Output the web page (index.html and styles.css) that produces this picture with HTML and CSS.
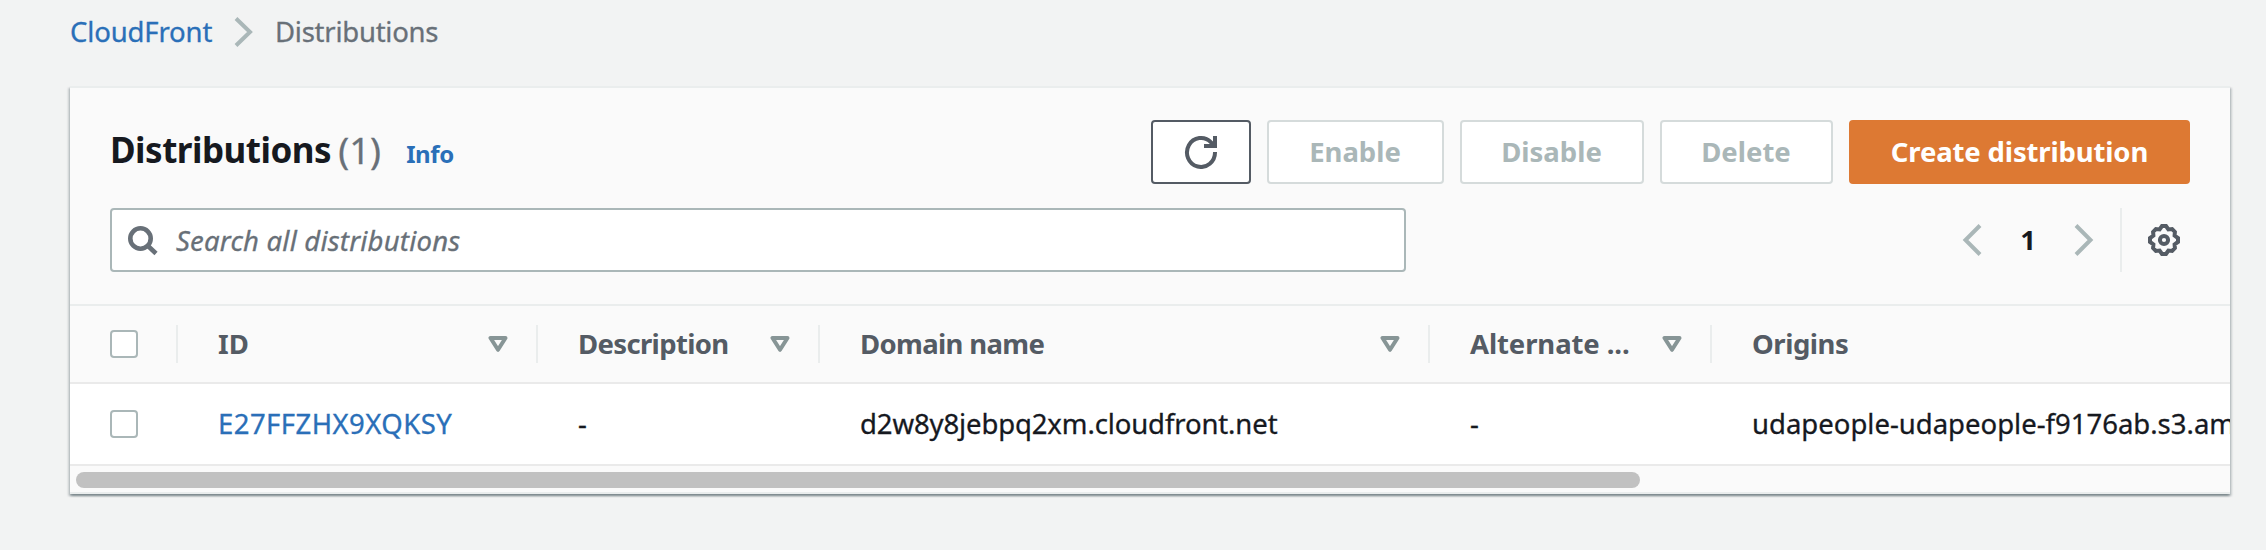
FILE: index.html
```html
<!DOCTYPE html>
<html lang="en">
<head>
<meta charset="utf-8">
<title>CloudFront Distributions</title>
<link rel="stylesheet" href="styles.css">
</head>
<body>
<nav class="breadcrumb">
  <a class="crumb-link t-cf">CloudFront</a>
  <svg class="crumb-sep" width="20" height="32" viewBox="0 0 20 32"><path d="M2 2.500 16 16 2 29.500"/></svg>
  <span class="crumb-current t-crumb">Distributions</span>
</nav>
<main class="card">
  <header class="card-head">
    <div class="title-row">
      <h1 class="title"><span class="t-title">Distributions</span><span class="count">(1)</span></h1>
      <a class="info">Info</a>
      <div class="actions">
        <button class="btn btn-refresh" aria-label="Refresh">
          <svg width="34" height="34" viewBox="0 0 34 34"><path d="M31 17A14 14.500 0 1 1 27 7.300L30 11"/><path d="M31 1V11H20"/></svg>
        </button>
        <button class="btn btn-off b-enable">Enable</button>
        <button class="btn btn-off b-disable">Disable</button>
        <button class="btn btn-off b-delete">Delete</button>
        <button class="btn btn-primary">Create distribution</button>
      </div>
    </div>
    <div class="tools-row">
      <div class="search">
        <svg width="32" height="32" viewBox="0 0 32 32"><circle cx="12.500" cy="12.500" r="10.200"/><path d="M19.500 19.500 28 27.500"/></svg>
        <span class="placeholder">Search all distributions</span>
      </div>
      <div class="pager">
        <svg class="chev" width="20" height="32" viewBox="0 0 20 32"><path d="M18 1.500 3.500 16 18 30.500"/></svg>
        <span class="page">1</span>
        <svg class="chev" width="20" height="32" viewBox="0 0 20 32"><path d="M2 1.500 16.500 16 2 30.500"/></svg>
      </div>
      <div class="settings">
        <svg width="32" height="32" viewBox="0 0 32 32"><path d="M14 2H18L20.400 5.400 24.100 5.100 26.900 7.900 26.600 11.600 30 14V18L26.600 20.400 26.900 24.100 24.100 26.900 20.400 26.600 18 30H14L11.600 26.600 7.900 26.900 5.100 24.100 5.400 20.400 2 18V14L5.400 11.600 5.100 7.900 7.900 5.100 11.600 5.400Z"/><circle cx="16" cy="16" r="4.100"/></svg>
      </div>
    </div>
  </header>
  <div class="table">
    <div class="row row-head">
      <div class="cell"><span class="check"></span></div>
      <div class="cell"><span>ID</span><svg class="sort" width="20" height="16" viewBox="0 0 20 16"><path d="M2.500 2h15L10 13.800z"/></svg></div>
      <div class="cell"><span class="t-tight">Description</span><svg class="sort" width="20" height="16" viewBox="0 0 20 16"><path d="M2.500 2h15L10 13.800z"/></svg></div>
      <div class="cell"><span class="t-tight">Domain name</span><svg class="sort" width="20" height="16" viewBox="0 0 20 16"><path d="M2.500 2h15L10 13.800z"/></svg></div>
      <div class="cell"><span class="t-alt">Alternate ...</span><svg class="sort" width="20" height="16" viewBox="0 0 20 16"><path d="M2.500 2h15L10 13.800z"/></svg></div>
      <div class="cell"><span class="t-orig">Origins</span></div>
    </div>
    <div class="row row-body">
      <div class="cell"><span class="check"></span></div>
      <div class="cell"><a class="t-link">E27FFZHX9XQKSY</a></div>
      <div class="cell"><span>-</span></div>
      <div class="cell"><span class="t-host">d2w8y8jebpq2xm.cloudfront.net</span></div>
      <div class="cell"><span>-</span></div>
      <div class="cell"><span>udapeople-udapeople-f9176ab.s3.amazonaws.com</span></div>
    </div>
  </div>
  <div class="scroll"><div class="thumb"></div></div>
</main>
</body>
</html>
```
FILE: styles.css
```css
* { box-sizing: border-box; }
body {
  margin: 0;
  width: 2266px;
  height: 550px;
  overflow: hidden;
  background: #f2f3f3;
  color: #16191f;
  font: 27.5px/36px "Noto Sans", sans-serif;
  white-space: nowrap;
}
svg { display: block; flex: none; fill: none; stroke-width: 4; }
.breadcrumb {
  display: flex;
  align-items: center;
  height: 86px;
  padding: 0 0 22px 70px;
}
.crumb-link, .info, .t-link { color: #2a6fb8; }
.crumb-link { width: 164px; }
.crumb-sep { stroke: #aab7b8; }
.crumb-current { margin-left: 21px; color: #687078; }
.breadcrumb, .placeholder, .count, .row-body { -webkit-text-stroke: .3px; }
.t-cf { letter-spacing: -.15px; }
.t-crumb { letter-spacing: -.25px; }
.t-title { letter-spacing: -.5px; }
.t-tight { letter-spacing: -.65px; }
.t-alt { letter-spacing: -.1px; }
.t-orig { letter-spacing: -.45px; }
.t-link { letter-spacing: .45px; }
.t-host { letter-spacing: -.12px; }
.card {
  width: 2160px;
  height: 408px;
  margin-left: 70px;
  border-top: 2px solid #eaeded;
  border-bottom: 2px solid #eaeded;
  background: #fafafa;
  box-shadow: 0 2px 2px rgba(0,28,36,.3), 2px 2px 2px rgba(0,28,36,.15), -2px 2px 2px rgba(0,28,36,.15);
}
.card-head {
  height: 218px;
  padding: 32px 40px 0;
  border-bottom: 2px solid #eaeded;
}
.title-row { display: flex; height: 64px; align-items: center; }
.title { display: flex; margin: 0; font-size: 35px; line-height: 64px; padding-bottom: 4px; }
.count { margin-left: 7px; width: 44px; font-size: 36.500px; color: #687078; font-weight: 400; }
.info { margin-left: 24px; font-size: 24px; font-weight: 700; padding-top: 4px; letter-spacing: -.4px; }
.actions { display: flex; gap: 16px; margin-left: auto; }
.btn {
  display: flex;
  align-items: center;
  justify-content: center;
  height: 64px;
  padding: 0;
  border: 2px solid #d5dbdb;
  border-radius: 4px;
  background: #fff;
  color: #aab7b8;
  font: 700 27.5px/36px "Noto Sans", sans-serif;
}
.btn-off { padding-right: 1px; }
.btn-refresh { width: 100px; border-color: #545b64; }
.btn-refresh svg { stroke: #545b64; }
.b-enable { width: 177px; }
.b-disable { width: 184px; }
.b-delete { width: 173px; }
.btn-primary {
  width: 341px;
  border-color: #dd7933;
  background: #dd7933;
  color: #fff;
  letter-spacing: -.15px;
}
.tools-row { display: flex; margin-top: 24px; height: 64px; align-items: center; }
.search {
  display: flex;
  align-items: center;
  width: 1296px;
  height: 64px;
  padding-left: 16px;
  border: 2px solid #aab7b8;
  border-radius: 4px;
  background: #fff;
  color: #687078;
  font-style: italic;
}
.search svg { stroke: #687078; stroke-width: 4.600px; margin: 4px 16px 0 0; }
.placeholder { padding-top: 2px; letter-spacing: .2px; }
.pager { display: flex; align-items: center; margin-left: auto; }
.chev { stroke: #aab7b8; }
.page { width: 92px; text-align: center; font-weight: 700; }
.settings {
  display: flex;
  align-items: center;
  height: 64px;
  margin-left: 26px;
  padding: 0 10px 0 26px;
  border-left: 2px solid #eaeded;
}
.settings svg { stroke: #545b64; }
.table { overflow: hidden; }
.row { display: grid; grid-template-columns: 108px 360px 282px 610px 282px 518px; align-items: center; }
.row-head { height: 78px; border-bottom: 2px solid #eaeaea; color: #545b64; font-weight: 700; }
.row-body { height: 82px; background: #fff; border-bottom: 2px solid #eaeaea; }
.cell { display: flex; align-items: center; height: 38px; padding: 0 28px 0 40px; border-right: 2px solid transparent; }
.row-head .cell { border-right-color: #eaeded; }
.row .cell:last-child { border-right: 0; padding-right: 0; }
.check { flex: none; width: 28px; height: 28px; border: 2px solid #aab7b8; border-radius: 4px; background: #fff; }
.sort { margin-left: auto; stroke: #879596; stroke-linejoin: round; }
.scroll { padding: 6px 0 0 6px; }
.thumb { width: 1564px; height: 16px; border-radius: 8px; background: #c1c1c1; }
```
